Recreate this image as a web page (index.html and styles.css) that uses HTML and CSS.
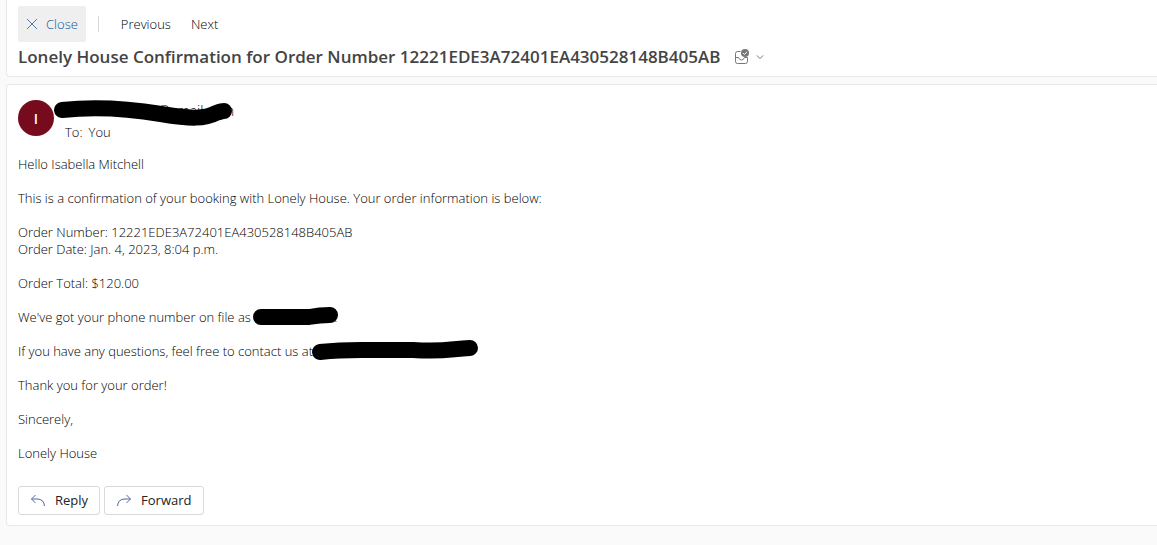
FILE: index.html
```html
<!DOCTYPE html>
<html lang="en">
<head>
<meta charset="utf-8">
<title>Lonely House Confirmation</title>
<link rel="stylesheet" href="styles.css">
</head>
<body>
<header class="panel header">
  <nav class="toolbar">
    <button class="tool tool-close" type="button">
      <svg width="12" height="12" viewBox="0 0 12 12"><path d="M1 1l10 10M11 1L1 11"/></svg>
      Close
    </button>
    <span class="divider"></span>
    <button class="tool" type="button">Previous</button>
    <button class="tool" type="button">Next</button>
  </nav>
  <div class="subject">
    <h1>Lonely House Confirmation for Order Number 12221EDE3A72401EA430528148B405AB</h1>
    <button class="category" type="button" aria-label="Inbox options">
      <svg class="inbox" width="16" height="16" viewBox="0 0 16 16">
        <path d="M6.500 2.500H3.500A2 2 0 0 0 1.500 4.500V12.500A2 2 0 0 0 3.500 14.500h8A2 2 0 0 0 13.500 12.500V8.500M1.500 8.500H4.500Q5.500 11 7.500 11T10.500 8.500h3"/>
        <circle cx="11" cy="4" r="4"/>
        <path class="tick" d="M9 4.100l1.400 1.400 2.600-2.700"/>
      </svg>
      <svg class="chevron" width="8" height="8" viewBox="0 0 8 8"><path d="M.8 2.400L4 5.600l3.200-3.200"/></svg>
    </button>
  </div>
</header>

<main class="panel message">
  <div class="sender">
    <div class="avatar">I</div>
    <div class="people">
      <div class="from">@gmail.com
        <svg class="redaction" width="182" height="30" viewBox="0 0 182 30"><path d="M9 11C45 7 78 10 108 15S152 20 163 14Q169 12 171 12"/></svg>
      </div>
      <div class="to"><span>To:</span><span>You</span></div>
    </div>
  </div>
  <article class="body">
    <p>Hello Isabella Mitchell</p>
    <p>This is a confirmation of your booking with Lonely House. Your order information is below:</p>
    <p>Order Number: 12221EDE3A72401EA430528148B405AB<br>Order Date: Jan. 4, 2023, 8:04 p.m.</p>
    <p>Order Total: $120.00</p>
    <p>We've got your phone number on file as <span class="hidden phone"><svg class="redaction" width="88" height="22" viewBox="0 0 88 22"><path d="M9 12H57Q68 10 78 10"/></svg></span>.</p>
    <p>If you have any questions, feel free to contact us at<span class="hidden contact"><svg class="redaction" width="170" height="24" viewBox="0 0 170 24"><path d="M9 15Q28 13 50 13H102C134 15 139 12 159 11"/></svg></span></p>
    <p>Thank you for your order!</p>
    <p>Sincerely,</p>
    <p>Lonely House</p>
  </article>
  <div class="actions">
    <button class="action" type="button">
      <svg width="16" height="14" viewBox="0 0 16 14"><path d="M5.500 1L1.500 5l4 4M1.500 5H7Q14 5 14.500 12"/></svg>
      Reply
    </button>
    <button class="action" type="button">
      <svg width="16" height="14" viewBox="0 0 16 14"><path d="M10.500 1l4 4-4 4M14.500 5H9Q2 5 1.500 12"/></svg>
      Forward
    </button>
  </div>
</main>
</body>
</html>
```
FILE: styles.css
```css
* { box-sizing: border-box; }

body {
  margin: 0;
  background: #fafafa;
  color: #000;
  font: 300 13px/17px "Open Sans", "Noto Sans", sans-serif;
}

button {
  border: 0;
  padding: 0;
  background: none;
  color: inherit;
  font: inherit;
}

svg { fill: none; stroke: currentColor; }

.panel {
  margin-left: 6px;
  background: #fff;
  border: 1px solid #e9e9e9;
  border-right: 0;
  border-radius: 4px 0 0 4px;
}

.header {
  border-top: 0;
  border-top-left-radius: 0;
  padding: 6px 11px 5px;
}

.toolbar { display: flex; align-items: center; height: 36px; }

.tool { padding: 0 10px; }

.tool-close {
  display: flex;
  align-items: center;
  gap: 8px;
  height: 36px;
  padding: 0 8px;
  border-radius: 2px;
  background: #efefef;
  color: #0f549e;
}
.tool-close svg { color: #5475ae; }

.divider { width: 1px; height: 16px; margin: 0 12px; background: #d8d8d8; }

.subject { display: flex; align-items: center; gap: 14px; height: 29px; }

h1 { margin: 0; font-size: 17px; line-height: 24px; font-weight: 600; color: #444; white-space: nowrap; }

.category { display: flex; align-items: center; gap: 6px; color: #777; }
.inbox circle { fill: #777; stroke: none; }
.inbox .tick { stroke: #fff; }

.message { margin-top: 7px; padding: 15px 11px 10px; }

.sender { display: flex; gap: 11px; }

.avatar {
  width: 36px;
  height: 36px;
  border-radius: 50%;
  background: #750b1c;
  color: #fff;
  font-size: 14px;
  font-weight: 600;
  line-height: 37px;
  text-align: center;
}

.people { line-height: 18px; }
.from { position: relative; width: 169px; height: 23px; font-size: 14px; text-align: right; line-height: 22px; }
.from .redaction { left: -12px; top: -1px; }
.to { display: flex; gap: 6px; }

.redaction { position: absolute; stroke: #000; stroke-width: 16px; stroke-linecap: round; }

.body { margin-top: 15px; }
.body p { margin: 0 0 17px; }

.hidden { position: relative; display: inline-block; }
.hidden .redaction { bottom: -5px; left: -2px; }
.phone { width: 80px; }

.actions { display: flex; gap: 4px; margin-top: 24px; }

.action {
  display: flex;
  align-items: center;
  gap: 9px;
  height: 29px;
  padding: 0 11px;
  border: 1px solid #d9d9d9;
  border-radius: 3px;
  color: #222;
  font-weight: 400;
}
.action svg { color: #53699c; }
```
